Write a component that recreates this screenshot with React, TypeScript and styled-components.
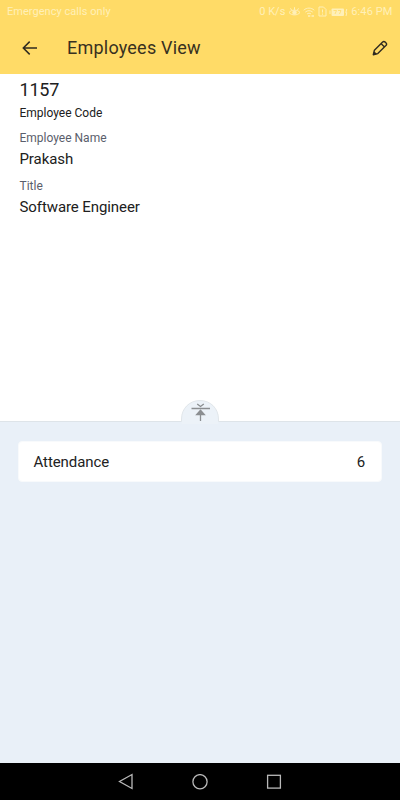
import React from "react";
import styled, { createGlobalStyle } from "styled-components";

const GlobalStyle = createGlobalStyle`
  * { box-sizing: border-box; }
  body { margin: 0; font-family: Roboto, "Liberation Sans", sans-serif; }
`;

const Screen = styled.div`
  width: 400px;
  height: 800px;
  display: flex;
  flex-direction: column;
  overflow: hidden;
  background: #fff;
`;

const Header = styled.header`
  height: 74px;
  flex: none;
  background: #ffdb67;
`;

const StatusBar = styled.div`
  height: 23px;
  padding: 0 7.5px 0 7px;
  display: flex;
  align-items: center;
  justify-content: space-between;
  color: #fff0b8;
  font-size: 11px;
  line-height: 23px;
`;

const Carrier = styled.span`
  letter-spacing: 0.04px;
`;

const StatusItems = styled.div`
  display: flex;
  align-items: center;
  svg { display: block; margin-left: 2.5px; }
`;

const Clock = styled.span`
  margin-left: 3px;
  letter-spacing: 0.1px;
`;

const TitleBar = styled.div`
  height: 51px;
  display: flex;
  align-items: center;
  padding: 0 11px 0 21px;
  svg { display: block; }
`;

const PageTitle = styled.h1`
  flex: 1;
  margin: -2px 0 0 28px;
  font-size: 18px;
  line-height: 24px;
  font-weight: 400;
  letter-spacing: 0.22px;
  color: #38311f;
`;

const Details = styled.main`
  height: 347px;
  flex: none;
  padding: 4px 19.5px 0;
`;

const Code = styled.div`
  font-size: 18px;
  line-height: 24px;
  letter-spacing: -0.2px;
  color: #202020;
`;

const CodeCaption = styled.div`
  margin-top: 2px;
  font-size: 12px;
  line-height: 18px;
  color: #202020;
`;

const Field = styled.div`
  margin-top: 7px;
`;

const FieldLabel = styled.div`
  font-size: 12px;
  line-height: 18px;
  color: #5a5e6c;
`;

const FieldValue = styled.div`
  margin-top: 2px;
  font-size: 15px;
  line-height: 21px;
  letter-spacing: -0.09px;
  color: #202020;
`;

const Related = styled.section`
  position: relative;
  flex: 1;
  background: #e9f0f8;
  border-top: 1px solid #dee4e9;
  padding: 19px 18px 0;
`;

const Handle = styled.div`
  position: absolute;
  left: 181px;
  top: -22px;
  svg { display: block; }
`;

const Card = styled.div`
  height: 41px;
  padding: 0 16px 0 14.5px;
  display: flex;
  align-items: center;
  justify-content: space-between;
  background: #fff;
  border-radius: 4px;
  border: 1px solid #f8fafc;
  font-size: 15px;
  letter-spacing: -0.09px;
  color: #222;
`;

const NavBar = styled.nav`
  height: 37px;
  flex: none;
  display: flex;
  justify-content: center;
  align-items: center;
  gap: 58px;
  background: #000;
  svg { display: block; }
`;

export default function App() {
  return (
    <>
      <GlobalStyle />
      <Screen>
        <Header>
          <StatusBar>
            <Carrier>Emergency calls only</Carrier>
            <StatusItems>
              <span>0 K/s</span>
              <svg width="13" height="12" viewBox="0 0 13 12" fill="none" stroke="currentColor">
                <path d="M1 6.5C3.5 3.3 9.5 3.3 12 6.5 9.5 9.7 3.5 9.7 1 6.5Z" />
                <circle cx="6.5" cy="6.5" r="1.8" fill="currentColor" />
                <path d="M6.5 3.8V1.2M3.7 4.3 2.5 2.3M9.3 4.3l1.2-2" />
              </svg>
              <svg width="12" height="12" viewBox="0 0 12 12" fill="none" stroke="currentColor">
                <path d="M.7 4.2C3.7 1.4 8.3 1.4 11.3 4.2M2.3 6.1C4.4 4.2 7.6 4.2 9.7 6.1M4 8c1.2-1 2.8-1 4 0" />
                <path d="M5 10h2.3M8.5 10H11" strokeWidth="1.3" />
              </svg>
              <svg width="9" height="12" viewBox="0 0 9 12" fill="none" stroke="currentColor">
                <path d="M1 1h4.5L8 3.5V10H1ZM4.5 3.5v3M4.5 7.5v1.2" />
              </svg>
              <svg width="19" height="12" viewBox="1 0 19 12">
                <rect x="3.5" y="2.5" width="12.5" height="7.5" rx="1" fill="currentColor" />
                <path d="M2 4.5v3.5" stroke="currentColor" />
                <path d="M5.5 4.5h3L7 8M10 4.5h3L11.5 8" fill="none" stroke="#ffdb67" strokeWidth=".8" />
                <path d="M18.8 3 17.8 6.7h1L18 10" fill="none" stroke="currentColor" />
              </svg>
              <Clock>6:46 PM</Clock>
            </StatusItems>
          </StatusBar>
          <TitleBar>
            <svg width="18" height="18" viewBox="0 0 18 18" fill="none" stroke="#302b20" strokeWidth="1.5">
              <path d="M16 8H2.8M8.7 1.6 2.3 8l6.4 6.4" />
            </svg>
            <PageTitle>Employees View</PageTitle>
            <svg width="18" height="18" viewBox="0 0 18 18" fill="none" stroke="#302b20" strokeWidth="1.4" strokeLinejoin="round">
              <path d="M2.3 14.7 3.4 10.2 11.4 2.2Q12.8.9 14.2 2.1L15 2.9Q16.2 4.2 14.9 5.6L6.8 13.6ZM10 3.6l3.5 3.5" />
              <path d="m2.3 14.7.9-3.4 2.8 2.6Z" fill="#302b20" stroke="none" />
            </svg>
          </TitleBar>
        </Header>
        <Details>
          <Code>1157</Code>
          <CodeCaption>Employee Code</CodeCaption>
          <Field>
            <FieldLabel>Employee Name</FieldLabel>
            <FieldValue>Prakash</FieldValue>
          </Field>
          <Field>
            <FieldLabel>Title</FieldLabel>
            <FieldValue>Software Engineer</FieldValue>
          </Field>
        </Details>
        <Related>
          <Handle>
            <svg width="38" height="24" viewBox="0 0 38 24" fill="none">
              <path d="M.5 24V19C.5 8.5 8.5.5 19 .5s18.5 8 18.5 18.5v5Z" fill="#ecf2f8" />
              <path d="M.5 21.5V19C.5 8.5 8.5.5 19 .5s18.5 8 18.5 18.5v2.5" stroke="#e1e6ea" />
              <path d="m16.2 3.9 3.3 2.6 3.3-2.6M10.5 8.5H29M19.5 13v8" stroke="#8b8e91" strokeWidth="1.3" />
              <path d="m14.2 15.3 5.3-6.1 5.3 6.1Z" fill="#8b8e91" />
            </svg>
          </Handle>
          <Card>
            <span>Attendance</span>
            <span>6</span>
          </Card>
        </Related>
        <NavBar>
          <svg width="16" height="18" viewBox="0 0 16 18" fill="none" stroke="#b9b9b9" strokeWidth="1.3">
            <path d="M14 1.5v14L1.5 8.5Z" />
          </svg>
          <svg width="16" height="16" viewBox="0 0 16 16" fill="none" stroke="#b9b9b9" strokeWidth="1.3">
            <circle cx="8" cy="7.7" r="7.1" />
          </svg>
          <svg width="16" height="16" viewBox="0 0 16 16" fill="none" stroke="#b9b9b9" strokeWidth="1.3">
            <rect x="1.6" y="1.3" width="12.8" height="12.8" />
          </svg>
        </NavBar>
      </Screen>
    </>
  );
}
